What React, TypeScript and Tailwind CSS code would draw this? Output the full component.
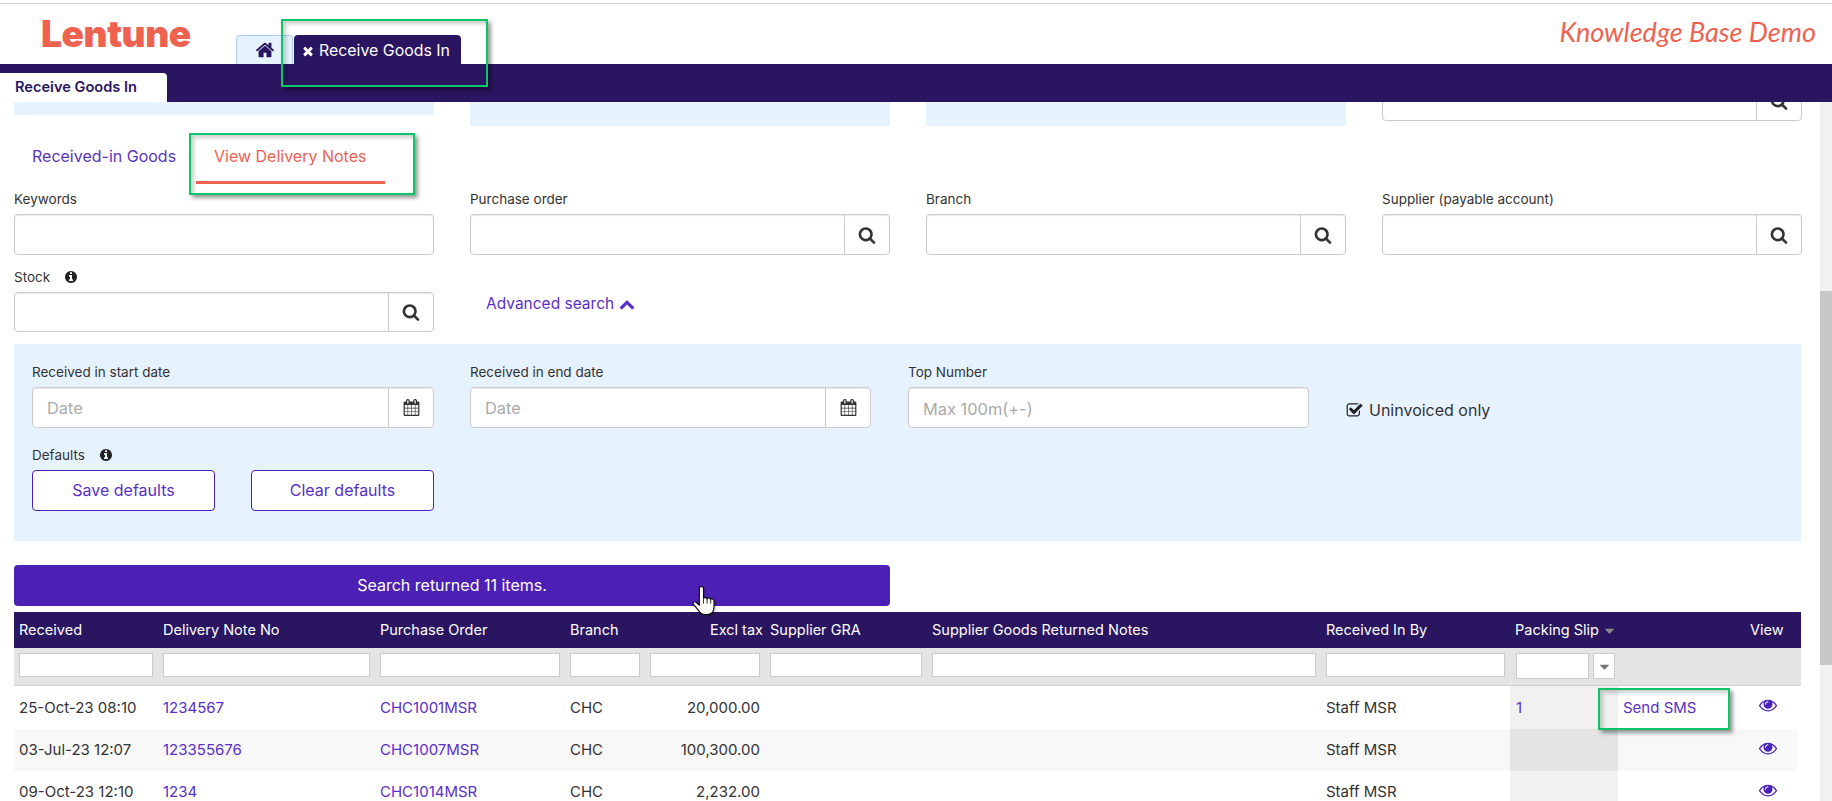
import React from 'react';
import { FaCaretDown } from 'react-icons/fa';

// Font Awesome 4 glyphs, the set the app uses
const ICONS = {
  home: 'M1472 992v480q0 26-19 45t-45 19h-384v-384h-256v384h-384q-26 0-45-19t-19-45v-480q0-1 .5-3t.5-3l575-474 575 474q1 2 1 6zm223-69l-62 74q-8 9-21 11h-3q-13 0-21-7l-692-577-692 577q-12 8-24 7-13-2-21-11l-62-74q-8-10-7-23.5t11-21.5l719-599q32-26 76-26t76 26l244 204v-195q0-14 9-23t23-9h192q14 0 23 9t9 23v408l219 182q10 8 11 21.5t-7 23.5z',
  times: 'M1490 1322q0 40-28 68l-136 136q-28 28-68 28t-68-28l-294-294-294 294q-28 28-68 28t-68-28l-136-136q-28-28-28-68t28-68l294-294-294-294q-28-28-28-68t28-68l136-136q28-28 68-28t68 28l294 294 294-294q28-28 68-28t68 28l136 136q28 28 28 68t-28 68l-294 294 294 294q28 28 28 68z',
  search: 'M1216 832q0-185-131.5-316.5t-316.5-131.5-316.5 131.5-131.5 316.5 131.5 316.5 316.5 131.5 316.5-131.5 131.5-316.5zm512 832q0 52-38 90t-90 38q-54 0-90-38l-343-342q-179 124-399 124-143 0-273.5-55.5t-225-150-150-225-55.5-273.5 55.5-273.5 150-225 225-150 273.5-55.5 273.5 55.5 225 150 150 225 55.5 273.5q0 220-124 399l343 343q37 37 37 90z',
  calendar: 'M192 1664h288v-288h-288v288zm352 0h320v-288h-320v288zm-352-352h288v-320h-288v320zm352 0h320v-320h-320v320zm-352-384h288v-288h-288v288zm736 736h320v-288h-320v288zm-384-736h320v-288h-320v288zm768 736h288v-288h-288v288zm-384-352h320v-320h-320v320zm-352-864v-288q0-13-9.5-22.5t-22.5-9.5h-64q-13 0-22.5 9.5t-9.5 22.5v288q0 13 9.5 22.5t22.5 9.5h64q13 0 22.5-9.5t9.5-22.5zm736 864h288v-320h-288v320zm-384-384h320v-288h-320v288zm384 0h288v-288h-288v288zm32-480v-288q0-13-9.5-22.5t-22.5-9.5h-64q-13 0-22.5 9.5t-9.5 22.5v288q0 13 9.5 22.5t22.5 9.5h64q13 0 22.5-9.5t9.5-22.5zm384-64v1280q0 52-38 90t-90 38h-1408q-52 0-90-38t-38-90v-1280q0-52 38-90t90-38h128v-96q0-66 47-113t113-47h64q66 0 113 47t47 113v96h384v-96q0-66 47-113t113-47h64q66 0 113 47t47 113v96h128q52 0 90 38t38 90z',
  info: 'M1152 1376v-160q0-14-9-23t-23-9h-96v-512q0-14-9-23t-23-9h-320q-14 0-23 9t-9 23v160q0 14 9 23t23 9h96v320h-96q-14 0-23 9t-9 23v160q0 14 9 23t23 9h448q14 0 23-9t9-23zm-128-896v-160q0-14-9-23t-23-9h-192q-14 0-23 9t-9 23v160q0 14 9 23t23 9h192q14 0 23-9t9-23zm640 416q0 209-103 385.5t-279.5 279.5-385.5 103-385.5-103-279.5-279.5-103-385.5 103-385.5 279.5-279.5 385.5-103 385.5 103 279.5 279.5 103 385.5z',
  chevronUp: 'M1683 1331l-166 165q-19 19-45 19t-45-19l-531-531-531 531q-19 19-45 19t-45-19l-166-165q-19-19-19-45.5t19-45.5l742-741q19-19 45-19t45 19l742 741q19 19 19 45.5t-19 45.5z',
  checkSquare: 'M1472 930v318q0 119-84.5 203.5t-203.5 84.5h-832q-119 0-203.5-84.5t-84.5-203.5v-832q0-119 84.5-203.5t203.5-84.5h832q63 0 117 25 15 7 18 23 3 17-9 29l-49 49q-10 10-23 10-3 0-9-2-23-6-45-6h-832q-66 0-113 47t-47 113v832q0 66 47 113t113 47h832q66 0 113-47t47-113v-254q0-13 9-22l64-64q10-10 23-10 6 0 12 3 20 8 20 29zm231-489l-814 814q-24 24-57 24t-57-24l-430-430q-24-24-24-57t24-57l110-110q24-24 57-24t57 24l263 263 647-647q24-24 57-24t57 24l110 110q24 24 24 57t-24 57z',
  eye: 'M1664 960q-152-236-381-353 61 104 61 225 0 185-131.5 316.5t-316.5 131.5-316.5-131.5-131.5-316.5q0-121 61-225-229 117-381 353 133 205 333.5 326.5t434.5 121.5 434.5-121.5 333.5-326.5zm-720-384q0-20-14-34t-34-14q-125 0-214.5 89.5t-89.5 214.5q0 20 14 34t34 14 34-14 14-34q0-86 61-147t147-61q20 0 34-14t14-34zm848 384q0 34-20 69-140 230-376.5 368.5t-499.5 138.5-499.5-139-376.5-368q-20-35-20-69t20-69q140-229 376.5-368t499.5-139 499.5 139 376.5 368q20 35 20 69z',
};

const Icon = ({ name, className }: { name: keyof typeof ICONS; className: string }) => (
  <svg viewBox="0 0 1792 1792" fill="currentColor" className={className}>
    <path d={ICONS[name]} />
  </svg>
);

const COLUMNS = [
  { label: 'Received', width: 'w-[144px]' },
  { label: 'Delivery Note No', width: 'w-[217px]' },
  { label: 'Purchase Order', width: 'w-[190px]' },
  { label: 'Branch', width: 'w-[80px]' },
  { label: 'Excl tax', width: 'w-[120px]' },
  { label: 'Supplier GRA', width: 'w-[162px]' },
  { label: 'Supplier Goods Returned Notes', width: 'w-[394px]' },
  { label: 'Received In By', width: 'w-[189px]' },
];

const ROWS = [
  { received: '25-Oct-23 08:10', note: '1234567', order: 'CHC1001MSR', tax: '20,000.00', slip: '1', sms: true, h: 'h-[43px]' },
  { received: '03-Jul-23 12:07', note: '123355676', order: 'CHC1007MSR', tax: '100,300.00', slip: '', sms: false, h: 'h-[42px]' },
  { received: '09-Oct-23 12:10', note: '1234', order: 'CHC1014MSR', tax: '2,232.00', slip: '', sms: false, h: 'h-[42px]' },
];

const Label = ({ children }: { children: React.ReactNode }) => (
  <div className="h-[18px] text-[13.5px] leading-[18px] text-[#333] mb-[6px] flex items-center">{children}</div>
);

const Addon = ({ children, height = 'h-[41px]', placeholder }: { children: React.ReactNode; height?: string; placeholder?: string }) => (
  <div className={`flex ${height} bg-white border border-[#ccc] rounded-[4px] overflow-hidden shadow-[inset_0_1px_1px_rgba(0,0,0,0.08)]`}>
    <input placeholder={placeholder} className="flex-1 min-w-0 px-[14px] pt-[2px] text-[16.4px] outline-none placeholder:text-[#aaa]" />
    <div className="w-[45px] border-l border-[#ccc] flex items-center justify-center text-[#333]">{children}</div>
  </div>
);

const SearchField = ({ label }: { label: string }) => (
  <div>
    <Label>{label}</Label>
    <Addon>
      <Icon name="search" className="w-[18px] h-[18px]" />
    </Addon>
  </div>
);

const GreenBox = ({ className }: { className: string }) => (
  <div className={`absolute border-[2px] border-[#0cc46a] shadow-[3px_3px_4px_rgba(0,0,0,0.4),inset_3px_3px_4px_rgba(0,0,0,0.2)] pointer-events-none ${className}`} />
);

export default function App() {
  return (
    <div className="relative w-[1832px] h-[801px] overflow-hidden bg-white font-['Inter',sans-serif] text-[#333]">
      <div className="pt-[3px]">
        <div className="border-t border-[#d0d0d0] h-[61px] flex items-end pl-[41px] pr-[16px]">
          <div className="self-start mt-[8px] w-[195px] text-[37px] leading-[44px] font-black text-[#ef6250] tracking-[-0.4px]">Lentune</div>
          <div className="w-[57px] h-[29px] bg-[#e7f2ff] border border-[#a9cdf5] border-b-0 rounded-t-[4px] flex items-center justify-center text-[#2a1560]">
            <Icon name="home" className="w-[20px] h-[20px]" />
          </div>
          <div className="ml-[1px] w-[167px] h-[29px] bg-[#2a1560] rounded-t-[4px] text-white text-[15.9px] flex items-center pl-[7px] pt-[3px] gap-[4px]">
            <Icon name="times" className="w-[14px] h-[14px]" />
            Receive Goods In
          </div>
          <div className="ml-auto self-start mt-[8px] text-[27px] leading-[40px] italic text-[#ef6250] font-['Lato',sans-serif]">Knowledge Base Demo</div>
        </div>
      </div>

      <div className="h-[38px] bg-[#2a1560] flex items-end">
        <div className="w-[167px] h-[29px] bg-white rounded-tr-[4px] pl-[15px] pt-[1px] flex items-center text-[14.6px] font-semibold text-[#2a1560]">Receive Goods In</div>
      </div>

      <div className="flex">
        <main className="w-[1820px] pl-[14px]">
          {/* tail of the panels scrolled under the nav bar */}
          <div className="grid grid-cols-[420px_420px_420px_420px] gap-x-[36px] h-[24px] items-start">
            <div className="h-[13px] bg-[#e7f2ff]" />
            <div className="h-[24px] bg-[#e7f2ff]" />
            <div className="h-[24px] bg-[#e7f2ff]" />
            <div className="h-[19px] overflow-hidden flex items-end">
              <div className="w-full">
                <Addon>
                  <Icon name="search" className="w-[18px] h-[18px]" />
                </Addon>
              </div>
            </div>
          </div>

          <div className="flex items-end h-[58px]">
            <div className="w-[182px] pl-[18px] pb-[18px] text-[16px] leading-[20px] text-[#5a35b8]">Received-in Goods</div>
            <div className="w-[189px] pl-[18px] pb-[15px] border-b-[3px] border-[#ef6250] text-[16px] leading-[20px] text-[#ef6250]">View Delivery Notes</div>
          </div>

          <div className="grid grid-cols-[420px_420px_420px_420px] gap-x-[36px] mt-[6px]">
            <div>
              <Label>Keywords</Label>
              <div className="h-[41px] bg-white border border-[#ccc] rounded-[4px] shadow-[inset_0_1px_1px_rgba(0,0,0,0.08)]" />
            </div>
            <SearchField label="Purchase order" />
            <SearchField label="Branch" />
            <SearchField label="Supplier (payable account)" />
          </div>

          <div className="grid grid-cols-[420px_420px] gap-x-[36px] mt-[13px]">
            <div>
              <Label>
                Stock
                <Icon name="info" className="ml-[14px] w-[14px] h-[14px] text-[#222]" />
              </Label>
              <Addon height="h-[40px]">
                <Icon name="search" className="w-[18px] h-[18px]" />
              </Addon>
            </div>
            <div className="pl-[16px] pt-[26px] text-[15.5px] leading-[20px] text-[#5a2fc9] flex items-start gap-[5px]">
              Advanced search
              <Icon name="chevronUp" className="w-[16px] h-[16px] mt-[2px]" />
            </div>
          </div>

          <section className="mt-[12px] w-[1787px] bg-[#e7f2ff] pt-[19px] pb-[30px] px-[18px]">
            <div className="flex">
              <div className="w-[402px]">
                <Label>Received in start date</Label>
                <Addon placeholder="Date">
                  <Icon name="calendar" className="w-[17px] h-[17px]" />
                </Addon>
              </div>
              <div className="w-[401px] ml-[36px]">
                <Label>Received in end date</Label>
                <Addon placeholder="Date">
                  <Icon name="calendar" className="w-[17px] h-[17px]" />
                </Addon>
              </div>
              <div className="w-[401px] ml-[37px]">
                <Label>Top Number</Label>
                <input placeholder="Max 100m(+-)" className="w-full h-[41px] bg-white border border-[#ccc] rounded-[4px] px-[14px] pt-[2px] text-[16.4px] outline-none placeholder:text-[#aaa] shadow-[inset_0_1px_1px_rgba(0,0,0,0.08)]" />
              </div>
              <div className="ml-[37px] mt-[37px] h-[20px] flex items-center gap-[6px] text-[16px]">
                <Icon name="checkSquare" className="w-[17px] h-[17px] text-[#222]" />
                Uninvoiced only
              </div>
            </div>
            <div className="mt-[18px]">
              <Label>
                Defaults
                <Icon name="info" className="ml-[14px] w-[14px] h-[14px] text-[#222]" />
              </Label>
              <div className="flex gap-[36px]">
                <button className="w-[183px] h-[41px] pb-[1px] bg-white border border-[#4b22bd] rounded-[4px] text-[16px] text-[#5a2fc9]">Save defaults</button>
                <button className="w-[183px] h-[41px] pb-[1px] bg-white border border-[#4b22bd] rounded-[4px] text-[16px] text-[#5a2fc9]">Clear defaults</button>
              </div>
            </div>
          </section>

          <div className="mt-[24px] w-[876px] h-[41px] pb-[2px] bg-[#4c20b4] rounded-[4px] text-white text-[16px] flex items-center justify-center">Search returned 11 items.</div>

          <table className="mt-[6px] w-[1787px] table-fixed border-collapse text-[15px]">
            <colgroup>
              {COLUMNS.map((c) => (
                <col key={c.label} className={c.width} />
              ))}
              <col className="w-[108px]" />
              <col className="w-[127px]" />
              <col className="w-[56px]" />
            </colgroup>
            <thead>
              <tr className="h-[36px] bg-[#2a1560] text-white text-[14.5px]">
                {COLUMNS.map((c) => (
                  <th key={c.label} className={`font-normal whitespace-nowrap pl-[5px] ${c.label === 'Excl tax' ? 'text-right pr-[2px]' : 'text-left pr-[5px]'}`}>{c.label}</th>
                ))}
                <th className="font-normal text-left pl-[5px]" colSpan={2}>
                  <span className="inline-flex items-center gap-[3px]">
                    Packing Slip
                    <FaCaretDown className="text-[#8a8a8a] text-[15px]" />
                  </span>
                </th>
                <th className="font-normal text-left pl-[5px]">View</th>
              </tr>
              <tr className="h-[37px] bg-[#e4e4e4] border-b border-[#cfcfcf]">
                {COLUMNS.map((c) => (
                  <td key={c.label} className="px-[5px] pb-[7px] pt-[5px] align-top">
                    <input className="block w-full h-[24px] bg-white border border-[#ccc]" />
                  </td>
                ))}
                <td className="pl-[6px] pt-[5px] align-top" colSpan={2}>
                  <div className="flex gap-[4px]">
                    <input className="w-[73px] h-[26px] bg-white border border-[#ccc]" />
                    <div className="w-[22px] h-[26px] bg-white border border-[#ccc] flex items-center justify-center text-[#777] text-[15px]">
                      <FaCaretDown />
                    </div>
                  </div>
                </td>
                <td />
              </tr>
            </thead>
            <tbody>
              {ROWS.map((r, i) => (
                <tr key={r.received} className={`${r.h} ${i % 2 === 1 ? 'bg-[#f8f8f8]' : 'bg-white'}`}>
                  <td className="px-[5px] pt-[2px] whitespace-nowrap">{r.received}</td>
                  <td className="px-[5px] pt-[2px] text-[#5a2fc9]">{r.note}</td>
                  <td className="px-[5px] pt-[2px] text-[#5a2fc9]">{r.order}</td>
                  <td className="px-[5px] pt-[2px]">CHC</td>
                  <td className="px-[5px] pt-[2px] text-right">{r.tax}</td>
                  <td className="px-[5px]" />
                  <td className="px-[5px]" />
                  <td className="px-[5px] pt-[2px]">Staff MSR</td>
                  <td className={`pl-[6px] pt-[2px] text-[#5a2fc9] ${i % 2 === 1 ? 'bg-[#e4e4e4]' : 'bg-[#f1f1f1]'}`}>{r.slip}</td>
                  <td className="pl-[5px] pt-[2px] text-[#5a2fc9]">{r.sms ? 'Send SMS' : ''}</td>
                  <td className="p-0 bg-white">
                    <div className={`${r.h} w-[53px] pl-[14px] flex items-center text-[#4b22bd] ${i % 2 === 1 ? 'bg-[#f8f8f8]' : 'bg-white'}`}>
                      <Icon name="eye" className="w-[18px] h-[18px] -mt-[4px]" />
                    </div>
                  </td>
                </tr>
              ))}
            </tbody>
          </table>
        </main>

        <div className="w-[12px] h-[699px] bg-[#f1f1f1] pt-[189px]">
          <div className="h-[374px] bg-[#c8c8c8]" />
        </div>
      </div>

      {/* annotations and pointer laid over the page */}
      <GreenBox className="left-[281px] top-[19px] w-[207px] h-[68px]" />
      <GreenBox className="left-[189px] top-[133px] w-[226px] h-[62px]" />
      <GreenBox className="left-[1598px] top-[688px] w-[132px] h-[42px]" />
      <svg viewBox="0 0 24 30" className="absolute left-[692px] top-[585px] w-[25px] h-[31px] drop-shadow-[1px_1px_1px_rgba(0,0,0,0.3)]">
        <path
          d="M9 1.5c1.2 0 2 .8 2 2V13c.3-1 3-1.2 3.5.3c.5-1 3-1 3.4.6c.6-.9 3-.7 3.3 1V21c0 4-2 7.5-7 7.5h-2c-3 0-4.5-1.5-6-4L1.2 18.5c-.8-1.5 1.2-3 2.6-1.8L7 19.5V3.5c0-1.2.8-2 2-2z"
          fill="#fff"
          stroke="#000"
          strokeWidth="1"
        />
        <path d="M11 13v5M14.5 13.5V18M18 14v4" fill="none" stroke="#000" strokeWidth="0.8" />
      </svg>
    </div>
  );
}
